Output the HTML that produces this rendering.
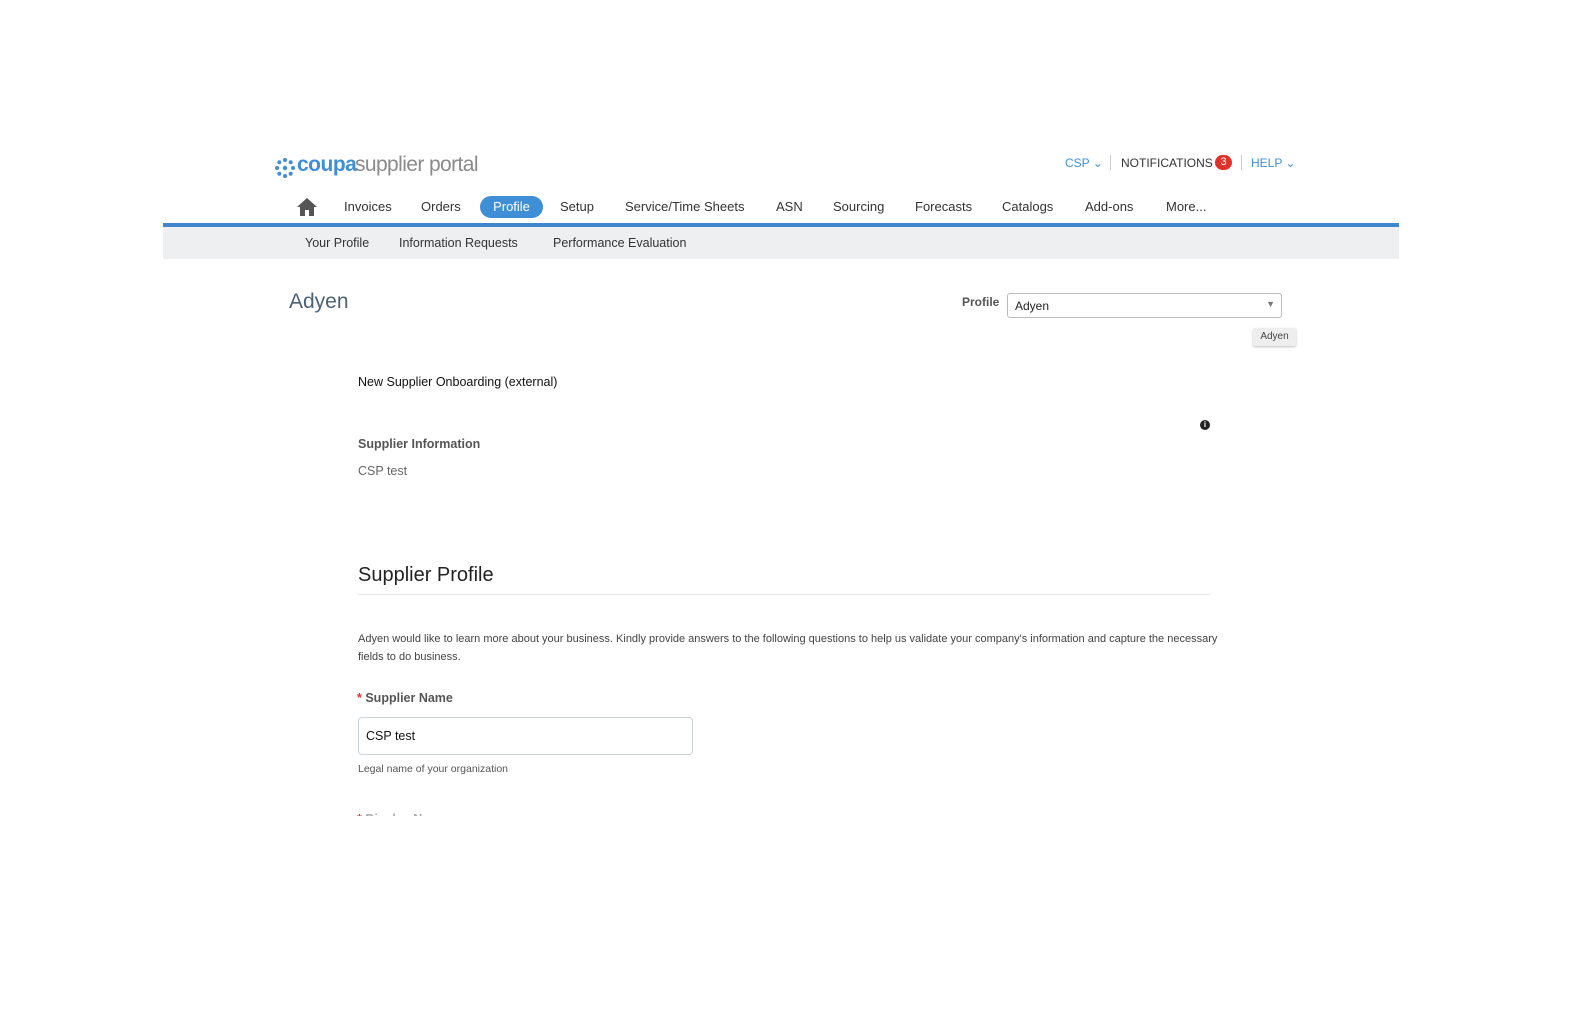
<!DOCTYPE html>
<html><head><meta charset="utf-8"><style>
*{margin:0;padding:0;box-sizing:border-box}
body{width:1584px;height:1012px;background:#fff;position:relative;overflow:hidden;font-family:"Liberation Sans",sans-serif}
.a{position:absolute;white-space:nowrap}
.nav{font-size:13px;color:#333;top:199px}
.sub{font-size:12.5px;color:#333;top:236px}
</style></head><body>
<svg class="a" style="left:274px;top:157px" width="22" height="22" viewBox="0 0 22 22">
<g fill="#3f8fd6">
<circle cx="11" cy="3" r="2"/><circle cx="11" cy="19" r="2"/><circle cx="3" cy="11" r="2"/><circle cx="19" cy="11" r="2"/>
<circle cx="5.3" cy="5.3" r="2"/><circle cx="16.7" cy="5.3" r="2"/><circle cx="5.3" cy="16.7" r="2"/><circle cx="16.7" cy="16.7" r="2"/>
<circle cx="11" cy="11" r="2.2"/></g></svg>
<div class="a" style="left:297px;top:153px;font-size:21px;font-weight:bold;color:#3f8fd6;letter-spacing:-0.5px">coupa</div>
<div class="a" style="left:355px;top:153px;font-size:21px;color:#8a8a8a;letter-spacing:-0.6px">supplier portal</div>

<div class="a" style="left:1065px;top:156px;font-size:12px;color:#3f8fd6">CSP ⌄</div>
<div class="a" style="left:1110px;top:155px;width:1px;height:15px;background:#ccc"></div>
<div class="a" style="left:1121px;top:156px;font-size:12px;color:#333">NOTIFICATIONS</div>
<div class="a" style="left:1215px;top:155px;width:17px;height:15px;border-radius:8px;background:#e0312a;color:#fff;font-size:11px;text-align:center;line-height:15px">3</div>
<div class="a" style="left:1241px;top:155px;width:1px;height:15px;background:#ccc"></div>
<div class="a" style="left:1251px;top:156px;font-size:12px;color:#3f8fd6">HELP ⌄</div>

<svg class="a" style="left:297px;top:198px" width="20" height="18" viewBox="0 0 20 18"><path d="M10 0L0 9h3v9h5v-6h4v6h5V9h3z" fill="#555"/></svg>
<div class="a nav" style="left:344px">Invoices</div>
<div class="a nav" style="left:421px">Orders</div>
<div class="a" style="left:480px;top:196px;width:63px;height:22px;border-radius:11px;background:#3f8fd6;color:#fff;font-size:13px;text-align:center;line-height:22px">Profile</div>
<div class="a nav" style="left:560px">Setup</div>
<div class="a nav" style="left:625px">Service/Time Sheets</div>
<div class="a nav" style="left:776px">ASN</div>
<div class="a nav" style="left:833px">Sourcing</div>
<div class="a nav" style="left:915px">Forecasts</div>
<div class="a nav" style="left:1002px">Catalogs</div>
<div class="a nav" style="left:1085px">Add-ons</div>
<div class="a nav" style="left:1166px">More...</div>

<div class="a" style="left:163px;top:223px;width:1236px;height:4px;background:#3f86cc"></div>
<div class="a" style="left:163px;top:227px;width:1236px;height:32px;background:#eeeff1"></div>
<div class="a sub" style="left:305px">Your Profile</div>
<div class="a sub" style="left:399px">Information Requests</div>
<div class="a sub" style="left:553px">Performance Evaluation</div>

<div class="a" style="left:289px;top:290px;font-size:21px;color:#4d6274">Adyen</div>
<div class="a" style="left:962px;top:295px;font-size:12px;font-weight:bold;color:#555">Profile</div>
<div class="a" style="left:1007px;top:293px;width:275px;height:25px;border:1px solid #bbb;border-radius:3px;font-size:12px;color:#222;padding:5px 7px">Adyen<span style="position:absolute;right:6px;top:5px;font-size:9px;color:#777">▼</span></div>
<div class="a" style="left:1253px;top:328px;width:43px;height:18px;background:#eee;border-radius:2px;box-shadow:0 1px 2px rgba(0,0,0,.25);font-size:10px;color:#444;text-align:center;line-height:18px">Adyen</div>

<div class="a" style="left:358px;top:375px;font-size:12.5px;color:#111">New Supplier Onboarding (external)</div>
<div class="a" style="left:1200px;top:420px;width:10px;height:10px;border-radius:50%;background:#222;color:#fff;font-size:8px;font-weight:bold;text-align:center;line-height:10px">i</div>
<div class="a" style="left:358px;top:437px;font-size:12.5px;font-weight:bold;color:#555">Supplier Information</div>
<div class="a" style="left:358px;top:464px;font-size:12.5px;color:#666">CSP test</div>

<div class="a" style="left:358px;top:564px;font-size:20px;color:#222">Supplier Profile</div>
<div class="a" style="left:358px;top:594px;width:852px;height:1px;background:#e3e3e3"></div>
<div class="a" style="left:358px;top:630px;font-size:11px;color:#444;line-height:18px;white-space:normal;width:860px">Adyen would like to learn more about your business. Kindly provide answers to the following questions to help us validate your company's information and capture the necessary fields to do business.</div>
<div class="a" style="left:357px;top:691px;font-size:12.5px;font-weight:bold;color:#555"><span style="color:#d33">*</span> Supplier Name</div>
<div class="a" style="left:358px;top:717px;width:335px;height:38px;border:1px solid #ccd3da;border-radius:4px;font-size:12.5px;color:#111;padding:11px 7px">CSP test</div>
<div class="a" style="left:358px;top:763px;font-size:10.5px;color:#555">Legal name of your organization</div>
<div class="a" style="left:357px;top:813px;width:80px;height:3px;overflow:hidden"><div style="font-size:12.5px;font-weight:bold;color:#aaa;margin-top:-1px"><span style="color:#d33">*</span> Display Name</div></div>
</body></html>
